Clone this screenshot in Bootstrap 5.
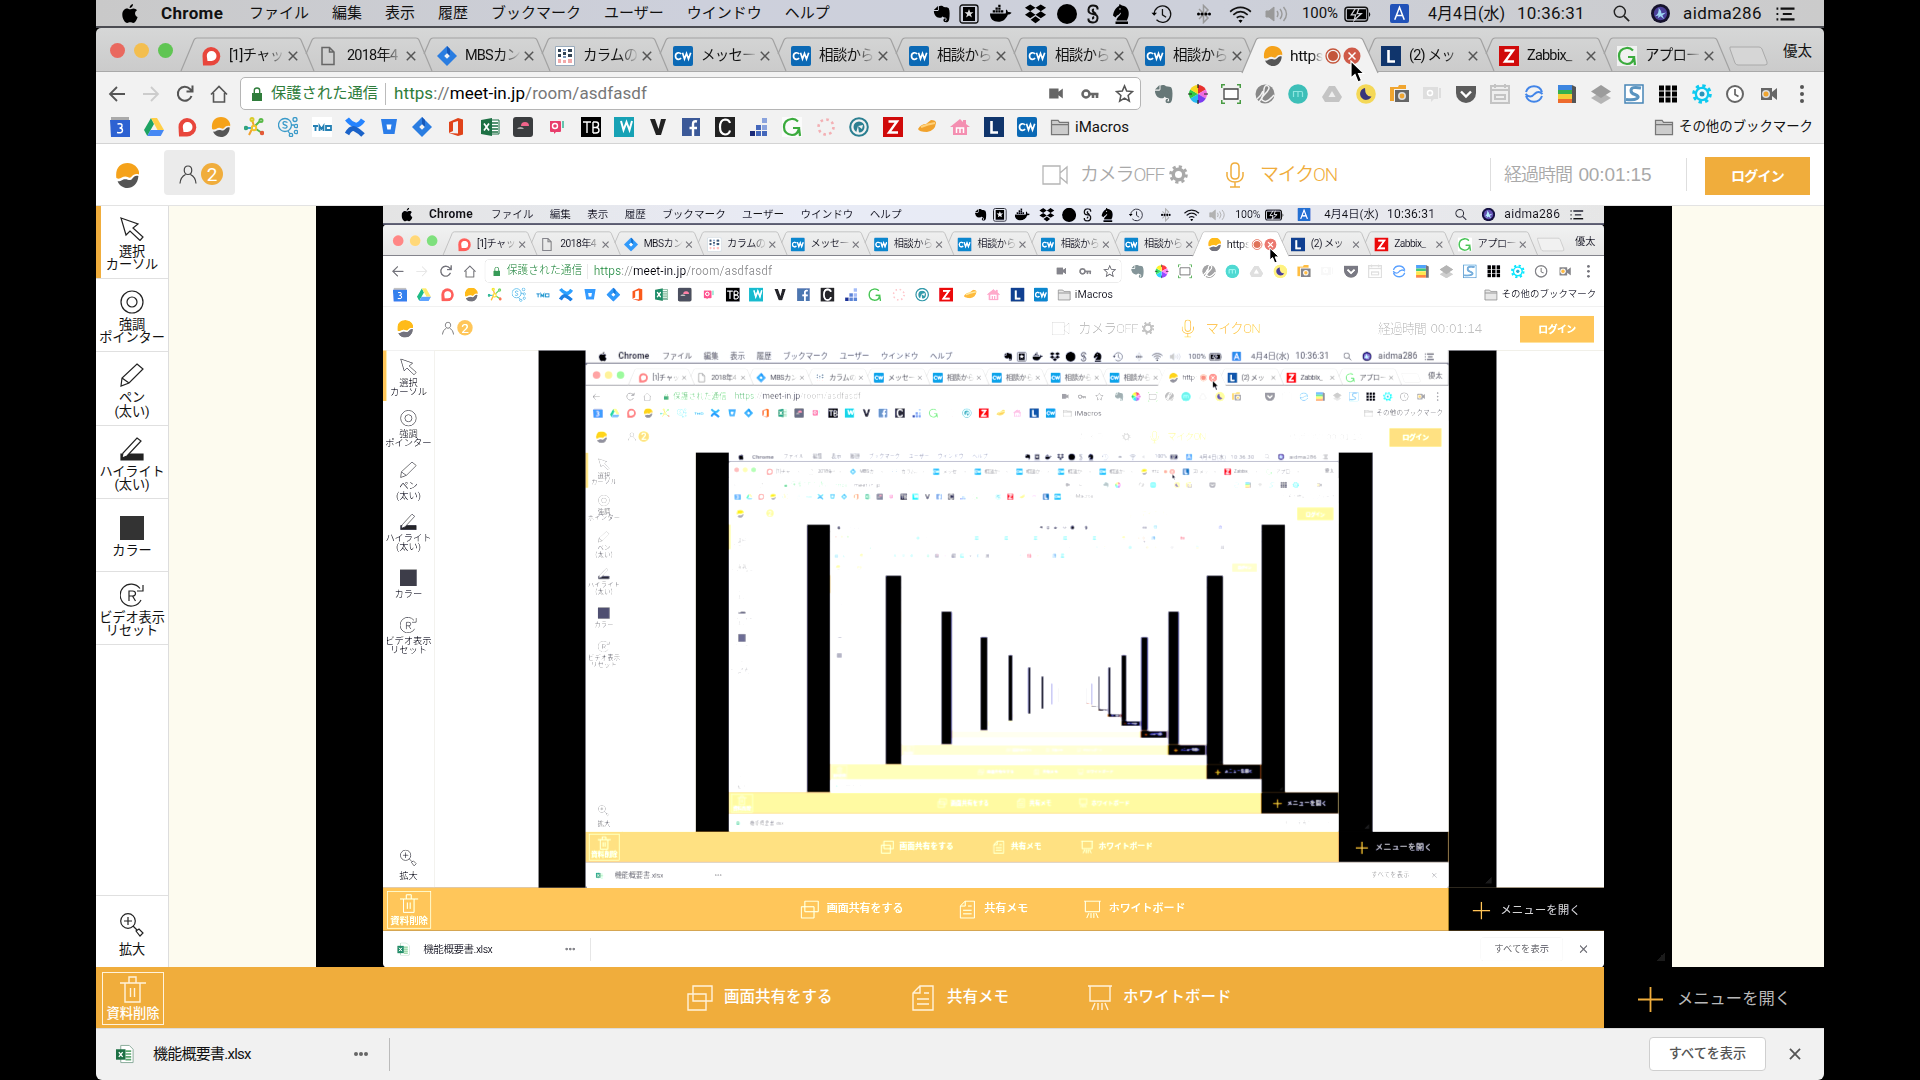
<!DOCTYPE html>
<html lang="ja">
<head>
<meta charset="utf-8">
<title>meet-in</title>
<link rel="stylesheet" href="https://cdn.jsdelivr.net/npm/bootstrap@5.3.0/dist/css/bootstrap.min.css">
<style>
body{background:#000;width:1920px;height:1080px;overflow:hidden;font-family:Roboto,"Noto Sans CJK JP",sans-serif;color:#111}
svg{display:block;flex:none}
.i20{width:20px;height:20px}
.desk{width:1728px;height:1080px;background:#000;line-height:1;white-space:nowrap;overflow:hidden;flex:none}
.ink{opacity:var(--ink,1)}
/* macOS menu bar */
.macbar{height:28px;background:linear-gradient(90deg,#c9c9c9,#cdd0dc 35%,#cdd0da 65%,#cbcbcb);font-size:15px;padding:1px 28px 0 26px;border-bottom:2px solid #4b4c52}
.macbar .menus{gap:23px}
.macbar .app-name{width:65px;margin-left:0;font-size:17px;font-weight:700;letter-spacing:.35px}
.status>*{margin-left:12px}
.status>:nth-child(2){margin-left:8px}.status>:nth-child(3){margin-left:11px}
.status>:nth-child(5),.status>:nth-child(6){margin-left:10px}.status>:nth-child(7){margin-left:13px}
.status>:nth-child(8){margin-left:21px}.status>:nth-child(9){margin-left:24px}.status>:nth-child(10){margin-left:17px}
.status>:nth-child(12){margin-left:13px}.status>:nth-child(13){margin-left:6px}
.status>:nth-child(14),.status>:nth-child(15){margin-left:19px}
.status>:nth-child(17){margin-left:25px}.status>:nth-child(18){margin-left:21px}.status>:nth-child(19){margin-left:13px}
.w36{width:36px;letter-spacing:-.1px}.w77{width:77px;font-size:16px}.w71{width:71px;font-size:17px;letter-spacing:.3px}.w80{width:80px;font-size:17px;letter-spacing:.4px}
/* browser chrome */
.strip{height:44px;background:linear-gradient(#d6d7d7,#cbcbcb);padding-left:14px;border-bottom:1px solid #a9a9a9;border-radius:5px 5px 0 0}
.lights{gap:9px;padding-top:15px;width:71px}
.dot{width:15px;height:15px;border-radius:50%;flex:none}
.d-red{background:#e9695f}.d-yel{background:#f3be4f}.d-grn{background:#60c553}
.tabs-row{padding-top:10px}
.tabx{width:118px;height:34px;padding-left:20px;padding-top:1px;font-size:14.5px;flex:none;position:relative}
.tabx .shape{position:absolute;left:0;top:0;width:134px;height:34px;fill:none;stroke:#a2a2a2;stroke-width:1.2;overflow:visible}
.tabx .shape.on{fill:#f2f2f2}
.tabx>*{position:relative}
.tlabel{width:56px;margin-left:8px;line-height:20px;letter-spacing:-.8px;-webkit-mask-image:linear-gradient(90deg,#000 65%,transparent);mask-image:linear-gradient(90deg,#000 65%,transparent)}
.tlabel.short{width:35px;margin-left:7px;margin-right:2px;font-size:15.5px;letter-spacing:-.4px}
.cross{width:10px;height:10px;margin-left:3px}
.newtab{margin:17px 0 0 8px}
.yuta{padding:17px 12px 0 0;font-size:14.5px}
.tools{height:72px;background:#f2f2f2;border-bottom:1px solid #d4d4d4;padding-top:5px}
.navs{gap:14px;padding-left:11px;width:144px}
.navs svg{width:20px;height:20px}
.nav-on{color:#555}.nav-off{color:#ccc;transform:scaleX(-1)}
.omni{width:901px;height:33px;border:1px solid #b5b5b5;border-radius:5px;background:#fff;padding:0 6px 0 11px;font-size:17px}
.sec{color:#2f7d3b;font-size:15.3px;margin-left:9px}
.bar-v{width:1px;height:22px;background:#bbb;margin:0 8px 0 7px}
.url{color:#777;letter-spacing:.06px}.url b{font-weight:400;color:#000}.url i{font-style:normal;color:#2f7d3b}
.exts{padding-left:13px;gap:13.6px}
.marks{gap:13.62px;padding:7px 11px 0 14px;font-size:15px}
.marks .fold{margin-left:-1px;gap:5px}
.marks .fold2{font-size:13.4px;gap:5px}
/* application */
.apphead{height:62px;background:#fff;border-bottom:1px solid #e3e3e3;padding-left:20px;font-size:19px;color:#a9a9a9}
.brand{margin-top:19px}
.who{width:71px;height:45px;margin:6px 0 0 25px;padding:3px 0 0 3px;background:#ebebeb;border-radius:4px;gap:4px}
.count{width:22px;height:22px;border-radius:50%;background:#f0ad3c;color:#fff;font-size:19px}
.headr{padding-right:14px}
.cam{width:82px;margin:0 7px 0 12px;letter-spacing:-1.2px}
.lib{font-family:"Liberation Sans","Noto Sans CJK JP",sans-serif}
.lite{font-weight:350}
.micic{margin-left:38px}
.mic{color:#f0ad3c;width:76px;margin:0 154px 0 16px;letter-spacing:-1.2px}
.vline{width:1px;height:33px;background:#dedede}
.elapsed{width:147px;margin:0 35px 0 13px;font-size:18px;letter-spacing:-1px}
.elapsed span{font-size:19px;letter-spacing:-.1px;margin-left:3px}
.login{width:105px;height:38px;border-radius:0;background:#f0ad3c;color:#fff;font-weight:700;font-size:14px;letter-spacing:-.8px;padding:0;margin-left:18px;margin-top:3px}
.mainrow{height:761px}
.side{width:73px;background:#fff;border-right:1px solid #ddd;color:#111}
.tool{height:73.2px;border-bottom:1.5px solid #e0e0e0;font-size:13.2px;line-height:13.2px;padding-top:11px;gap:4px;flex:none;letter-spacing:-.1px}
.tool svg{width:24px;height:24px;fill:none;stroke:#222;stroke-width:1.2}
.tool.sel{box-shadow:inset 5px 0 #f0ad3c}
.tool.one{padding-top:17px}
.tool.last{border-top:1.5px solid #e0e0e0;border-bottom:0;margin-top:auto;height:72px;gap:6px}
.stage{background:#fdfbef;padding-left:147px}
.share{width:1356px;height:761px;background:#000;padding-left:67px;position:relative}
.slot{width:1221px;height:762.5px;margin-top:-1.5px;overflow:hidden}
.stage,.share{display:flow-root}
.slot>.desk{transform:scale(.7066,.706);transform-origin:0 0;filter:url(#gain)}
.share{overflow:visible}
.grip{position:absolute;right:7px;bottom:6px;width:9px;height:9px;background:linear-gradient(135deg,transparent 50%,#1b1b1b 50%)}
.appfoot{height:61px;background:#f0ad3c;color:#fff;font-size:15.5px;font-weight:500;padding-left:6px}
.del{width:62px;height:53px;border:1.5px solid #fff3dc;margin-top:1px;font-size:13.3px;padding-top:3px;gap:4px}
.appfoot svg{fill:none;stroke:#fff3dc;stroke-width:1.4}
.f1{margin-left:523px;width:144px}.f2{margin-left:81px;width:96px;gap:13px}.f3{margin-left:80px;gap:11px}
.f1{gap:11px}
.menuopen{width:220px;margin-left:auto;background:#000;color:#b9b9b9;font-size:16.3px;font-weight:400;padding-left:34px;gap:14px;padding-top:3px}
.menuopen svg{stroke:#f0ad3c;stroke-width:1.8}
.dl{height:52px;background:#f1f1f1;border-top:1px solid #dcdcdc;border-radius:0 0 6px 6px;padding:0 0 1px 20px;font-size:15px}
.fname{width:96px;margin-left:18px;letter-spacing:-.75px}
.more{margin-left:105px;gap:1px}.more span{width:4px;height:4px;border-radius:50%;background:#666}
.dlsep{margin-left:21px;background:#bbb}
.showall{width:117px;height:34px;background:#fff;border:1px solid #cfcfcf;border-radius:4px;font-size:13.2px;font-weight:500;color:#555;padding:0}
.dlx{margin:0 23px}
.pointer{position:absolute;left:1253px;top:60px;width:16px;height:23px;z-index:9}
</style>
<script src="https://cdn.jsdelivr.net/npm/bootstrap@5.3.0/dist/js/bootstrap.bundle.min.js"></script>
</head>
<body class="d-flex justify-content-center">
<svg width="0" height="0" class="position-absolute">
<filter id="gain" color-interpolation-filters="sRGB" x="0" y="0" width="1" height="1"><feComponentTransfer>
<feFuncR type="table" tableValues="0 .1 .24 .42 .52 .62 .7 .8 .91 1 1"/><feFuncG type="table" tableValues="0 .1 .24 .42 .52 .62 .7 .8 .91 1 1"/><feFuncB type="table" tableValues="0 .1 .29 .47 .55 .63 .7 .8 .91 1 1"/></feComponentTransfer></filter>
<symbol id="apple" viewBox="0 0 16 20"><path d="M11 0c.2 2-1.600 4-3.400 4C7.400 2.200 9 .3 11 0zM8 5.300c.9 0 2-.9 3.600-.9 1.300 0 2.600.7 3.400 1.900-2.900 1.700-2.400 5.600.6 6.700C14.900 15.500 13.100 19 11.200 19c-1.100 0-1.600-.7-3-.7s-2 .7-3 .7C2.900 19 .3 14.500.3 10.700c0-3.900 2.300-6.200 4.600-6.200 1.300 0 2.300.8 3.100.8z"/></symbol>
<symbol id="ever" viewBox="0 0 20 20"><path d="M1 5.500 5.500 1v4.500zM6.500 5.500V1.500C8 .5 11 .8 12 2.200c2.500.2 4.500.3 5.500 1.500 1.300 3 1.200 8 .5 12-.5 3-2.500 3.800-5 3.300-2-.6-2-4.500 1-4.300v1.600c-1 0-1.200 1.200 0 1.300 1.500.2 1.700-3.200-.5-3.600-1.200-.2-2 0-2.800-1.500-.8 2-3 2-5 1.500C2.500 13.500.8 9 1 6.800h4.500z"/></symbol>
<symbol id="starbox" viewBox="0 0 20 20"><rect x="1" y="1" width="18" height="18" rx="2.500" fill="none" stroke="#111" stroke-width="1.300"/><path d="M4 3h12v14H4z"/><path fill="#ddd" d="m10 5 1.200 3.200h3.300l-2.600 2 1 3.300-2.900-2-2.900 2 1-3.300-2.600-2h3.300z"/></symbol>
<symbol id="docker" viewBox="0 0 24 20"><path d="M0 10h17c1-2 0-3 .5-4.500 1.500.5 2 2 2 3 1.500-.3 3 0 4 .6-.8 1.500-2.500 2-4 1.900C17.500 16 14 19 9 19 3.500 19 0 16 0 10zM3 6.500h2.500V9H3zM6 6.500h2.500V9H6zM9 6.500h2.500V9H9zM12 6.500h2.500V9H12zM6 3.500h2.500V6H6zM9 3.500h2.500V6H9zM9 .5h2.500V3H9z"/></symbol>
<symbol id="dropb" viewBox="0 0 24 20"><path d="m6.500 0 5.500 3.600-5.500 3.600L1 3.600zM17.500 0 23 3.600l-5.500 3.600L12 3.600zM6.500 7.200l5.500 3.600-5.500 3.600L1 10.800zM17.500 7.200l5.500 3.600-5.500 3.600-5.500-3.600zM12 12.400l5 3.600-5 3.600L7 16z"/></symbol>
<symbol id="knight" viewBox="0 0 18 20"><path d="M3.500 17.500h12.500V20H3.500zM4.500 16.500c0-3.500 4.500-5 4.500-8-1.500 1-2 2.500-4 3L3.500 13.500 1 11.500C1.500 8 3.500 3.500 7 2L7.500 0l2.500 1.500C16 2 17.500 8 16.500 12c-.3 2-1.300 3-1.500 4.500z"/><circle cx="8" cy="5" r=".8" fill="#ccc"/></symbol>
<symbol id="tm" viewBox="0 0 24 20"><path d="M3.500 10a9 9 0 1 1 2.500 6.300M12.500 4.500V11l4 2.500" fill="none" stroke="#111" stroke-width="1.400"/><path d="M.5 8.500h6L3.500 12z"/></symbol>
<symbol id="bt" viewBox="0 0 14 20"><path d="m2 5 9 9-4.500 4.500v-17L11 6l-9 9" fill="none" stroke="#999" stroke-width="1.500"/><circle cx="1.500" cy="10" r="1.500"/><circle cx="5" cy="10" r="1.600"/><circle cx="9" cy="10" r="1.600"/><circle cx="12.500" cy="10" r="1.500"/></symbol>
<symbol id="wifi" viewBox="0 0 25 20"><path d="M1 7.500c7-6.500 16-6.500 23 0M4.500 11c5-4.500 11-4.500 16 0M8.300 14.200c3-2.300 5.500-2.300 8.400 0" fill="none" stroke="#111" stroke-width="1.900"/><path d="m12.500 20-2.300-2.800c1.500-1 3-1 4.600 0z"/></symbol>
<symbol id="vol" viewBox="0 0 24 20"><g fill="#999" stroke="#999"><path d="M1 7h3l5-4v14l-5-4H1z"/><path fill="none" stroke-width="1.400" d="M12 7q2 3 0 6M15 5q4 5 0 10M18.500 3q6 7 0 14"/></g></symbol>
<symbol id="batt" viewBox="0 0 28 20"><rect x="1" y="3" width="23.500" height="14.500" rx="3" fill="none" stroke="#111" stroke-width="1.500"/><path d="M3 5h20v10.500H3zM26 8v5q2.500-2.500 0-5z"/><path fill="none" stroke="#d0d2d8" stroke-width="1.300" d="m12 4-4.500 7H12l-1.500 5.500L18 9.500h-4.500L15.500 4"/></symbol>
<symbol id="abox" viewBox="0 0 20 20"><rect width="20" height="20" rx="2" fill="#2152b8"/><path d="M5 16.500 10 3.500l5 13M7 12h6" fill="none" stroke="#fff" stroke-width="1.600"/></symbol>
<symbol id="lens" viewBox="0 0 20 20"><circle cx="8" cy="8" r="6.500" fill="none" stroke="#222" stroke-width="1.700"/><path d="m13 13 6 6" stroke="#222" stroke-width="2"/></symbol>
<symbol id="siri" viewBox="0 0 20 20"><circle cx="10" cy="10" r="10" fill="#15122c"/><circle cx="10" cy="10" r="7" fill="#4a3f98"/><path d="M4 13Q9 10 8 4q3 3 3 6l5-1q-3 2-4 3l2 4-4-3-3 2 1-3z" fill="#9ed7f4"/></symbol>
<symbol id="list" viewBox="0 0 22 20"><path d="M1 4h2M1 10h2M1 16h2M5.500 4H21M8 10h10M5.500 16H21" stroke="#111" stroke-width="2.300"/></symbol>
<symbol id="logo" viewBox="0 0 22 24"><path fill="#f5a21a" d="M.3 14.500C-1 5 4 0 11 0s12 6 11 11c-3-1-5.500 0-7 2-2 2.500-3.500 0-6 0-3.500 0-5 3.500-8.700 1.500z"/><path fill="#555" d="M1.500 17.500c3.500.5 4-2 7.500-2 2.500 0 4.500 2 6.500-.5 2-2 3-3.500 6-2.500C21 20 16 24 11 24c-4.500 0-8.500-3-9.500-6.500z"/></symbol>
<symbol id="red" viewBox="0 0 20 20"><path fill="#e8463c" d="M10 1a9 9 0 0 1 0 18.500H2L1.500 10A8.700 8.700 0 0 1 10 1z"/><path fill="#fff" d="M10.500 5a5 5 0 0 1 0 10H6.500l-.7-5a4.700 4.700 0 0 1 4.700-5z"/></symbol>
<symbol id="page" viewBox="0 0 20 20"><path d="M3 1.500h7.500L15 6v12.500H3zM10.500 1.500V6H15" fill="none" stroke="#666" stroke-width="1.500"/></symbol>
<symbol id="jira" viewBox="0 0 20 20"><path fill="#2a7de1" d="m10 0 10 10-10 10L0 10z"/><path fill="#1557b8" d="m10 0 3 3v7l-3-3z"/><path fill="#f2f2f2" d="m10 7.300 2.800 2.700-2.800 2.700L7.200 10z"/></symbol>
<symbol id="cells" viewBox="0 0 20 20"><path d="M.5.5h19v19H.5z" fill="#fff" stroke="#9ab"/><path fill="#345" d="M3 3h3v3H3zM8 6h3v3H8zM13 3h4v3h-4zM3 8h3v3H3zM13 8h4v3h-4z"/><path fill="#7c94b8" d="M8 3h3v2H8zM8 10h3v2H8z"/><path fill="#f3a9a9" d="M3 13h3v4H3zM8 14h3v3H8zM13 13h4v4h-4z"/></symbol>
<symbol id="cw" viewBox="0 0 20 20"><rect width="20" height="20" rx="2" fill="#0b69b5"/><path d="M8 8q-1-1.500-3-1.200Q2.500 7.200 2.500 10t2.500 3.300q2 .2 3-1.300M9.500 6.800 11.500 13 13.500 7.500 15.500 13 17.700 6.800" fill="none" stroke="#fff" stroke-width="1.700"/></symbol>
<symbol id="ell" viewBox="0 0 20 20"><path fill="#10356c" d="M0 0h20v20H0z"/><path d="M7.500 4v11.500H14" fill="none" stroke="#fff" stroke-width="2.600"/></symbol>
<symbol id="zed" viewBox="0 0 20 20"><path fill="#d00a0a" d="M0 0h20v20H0z"/><path d="M5.500 4.500h8.500L6 15.500h9" fill="none" stroke="#fff" stroke-width="2.400"/></symbol>
<symbol id="gee" viewBox="0 0 20 20"><path fill="#fff" opacity=".7" d="M0 0h20v20H0z"/><path d="M16 4.500Q13 1.500 9.500 2 2 3 2 10t8 8q6 0 7-7H11M17 11l1 8" fill="none" stroke="#3bab3d" stroke-width="2.200"/></symbol>
<symbol id="x" viewBox="0 0 10 10"><path d="m.8.8 8.400 8.400M9.200.8.8 9.200" stroke="#555" stroke-width="1.500"/></symbol>
<symbol id="back" viewBox="0 0 20 20"><path d="M18 10H3m7-7-7 7 7 7" fill="none" stroke="currentColor" stroke-width="1.800"/></symbol>
<symbol id="cal" viewBox="0 0 20 20"><path fill="#aaa" d="M1 0h18v4H1z"/><path fill="#2d62d2" d="M0 3h20v17H1z"/><path d="M7.500 7q5-1 4.500 2 0 2-2.500 2 3 0 3 2.500 0 3-5.500 2" stroke="#fff" fill="none" stroke-width="1.400"/></symbol>
<symbol id="drive" viewBox="0 0 20 20"><path fill="#1da362" d="M7 1 0 13l3.300 6L10 7z"/><path fill="#ffcf48" d="M7 1h6l7 12h-6.500z"/><path fill="#4688f4" d="M6.500 13H20l-3.300 6H3.300z"/></symbol>
<symbol id="folder" viewBox="0 0 20 18"><path d="M1 16.500V1.500h7l1.500 2H19v13zM1 6h18" fill="#ccc" stroke="#777" stroke-width="1.300"/></symbol>
<symbol id="vcam" viewBox="0 0 20 20"><path fill="#666" d="M2 4h11v4l5-4v12l-5-4v4H2z"/></symbol>
<symbol id="clock" viewBox="0 0 20 20"><circle cx="10" cy="10" r="8" fill="#fff" stroke="#666" stroke-width="2"/><path d="M10 5v5.500l3.500 2" fill="none" stroke="#666" stroke-width="1.700"/></symbol>
<symbol id="gear" viewBox="0 0 20 20"><circle cx="10" cy="10" r="5.500" fill="none" stroke="currentColor" stroke-width="3.600"/><circle cx="10" cy="10" r="8.300" fill="none" stroke="currentColor" stroke-width="3" stroke-dasharray="3.300 3.220"/></symbol>
<symbol id="xls" viewBox="0 0 20 20"><path fill="#fff" stroke="#8a9" d="M5 1h9l4 4v14H5z"/><path d="M10 7h6M10 10h6M10 13h6M10 16h6" stroke="#5da871" stroke-width="1.800"/><path fill="#1d7044" d="M0 5h10v11H0z"/><path d="m3 8 4 5M7 8l-4 5" stroke="#fff" stroke-width="1.400"/></symbol>
<symbol id="xlb" viewBox="0 0 20 20"><path fill="#fff" stroke="#1d7044" d="M10 3h9v14h-9z"/><path d="M11 6h7M11 9h7M11 12h7M11 15h7" stroke="#1d7044" stroke-width="1.400"/><path fill="#1d7044" d="M1 3 12 1v18L1 17z"/><path d="m4 6.500 5 7M9 6.500l-5 7" stroke="#fff" stroke-width="1.700"/></symbol>
</svg>

<template id="tpl">
<div class="desk d-flex flex-column position-relative">
 <div class="macbar"><div class="ink d-flex align-items-center justify-content-between h-100">
  <div class="menus d-flex align-items-center"><svg width="16" height="20"><use href="#apple"/></svg><span class="app-name">Chrome</span><span>ファイル</span><span>編集</span><span>表示</span><span>履歴</span><span>ブックマーク</span><span>ユーザー</span><span>ウインドウ</span><span>ヘルプ</span></div>
  <div class="status d-flex align-items-center">
   <svg width="18" height="20"><use href="#ever"/></svg><svg width="20" height="20"><use href="#starbox"/></svg><svg width="22" height="19"><use href="#docker"/></svg><svg width="23" height="20"><use href="#dropb"/></svg><svg width="20" height="20"><circle cx="10" cy="10" r="10"/></svg>
   <svg width="12" height="20" viewBox="0 0 12 20"><path d="M10.500 5.500V4Q10 1.500 6 1.500T1.500 5.500 6 10t4.500 4.500T6 18.500 1.500 16v-1.500M7 5.500q-2 0-1 2l3 2.500M5 14.500q2 0 1-2" fill="none" stroke="#111" stroke-width="2"/></svg>
   <svg width="18" height="20"><use href="#knight"/></svg><svg width="22" height="20"><use href="#tm"/></svg><svg width="14" height="20"><use href="#bt"/></svg><svg width="25" height="18"><use href="#wifi"/></svg><svg width="24" height="20"><use href="#vol"/></svg>
   <span class="w36">100%</span><svg width="27" height="20"><use href="#batt"/></svg><svg width="19" height="19"><use href="#abox"/></svg><span class="w77">4月4日(水)</span><span class="w71" data-clock>10:36:31</span><svg width="17" height="17"><use href="#lens"/></svg><svg width="19" height="19"><use href="#siri"/></svg><span class="w80">aidma286</span><svg width="21" height="18"><use href="#list"/></svg>
  </div></div></div>

 <div class="strip"><div class="ink d-flex">
  <div class="lights d-flex"><span class="dot d-red"></span><span class="dot d-yel"></span><span class="dot d-grn"></span></div>
  <div class="tabs-row d-flex" data-tabs></div>
  <svg class="newtab" width="46" height="24" viewBox="0 0 46 24"><path d="M9 2q-3-1-2 2l5 14q1 2 3 2h27q3 0 2-3L39 4q-1-2-3-2z" fill="#d6d6d6" stroke="#aaa"/></svg>
  <span class="yuta ms-auto">優太</span>
 </div></div>

 <div class="tools"><div class="ink">
  <div class="d-flex align-items-center">
   <div class="navs d-flex align-items-center"><svg class="nav-on"><use href="#back"/></svg><svg class="nav-off"><use href="#back"/></svg><svg viewBox="0 0 20 20"><path d="M16.500 12A7 7 0 1 1 15 5l2 2M17.500 1.500v6h-6" fill="none" stroke="#555" stroke-width="2"/></svg><svg viewBox="0 0 20 20"><path d="M2 10.500 10 2.500l8 8M4.500 9v9h11V9" fill="none" stroke="#555" stroke-width="1.600"/></svg></div>
   <div class="omni d-flex align-items-center"><svg width="10" height="14" viewBox="0 0 10 14"><path fill="#2f7d3b" d="M0 6h10v8H0z"/><path d="M2.300 7V3.500q0-2.500 2.700-2.500t2.700 2.500V7" fill="none" stroke="#2f7d3b" stroke-width="1.400"/></svg><span class="sec">保護された通信</span><span class="bar-v"></span><span class="url"><i>https</i>://<b>meet-in.jp</b>/room/asdfasdf</span>
    <svg class="ms-auto" width="18" height="17"><use href="#vcam"/></svg><svg class="mx-3" width="18" height="16" viewBox="0 0 18 16"><path d="M8 8h9.500M12 8v4M16 8v4" stroke="#666" stroke-width="2.600" fill="none"/><circle cx="5" cy="8" r="3.500" fill="none" stroke="#666" stroke-width="2.500"/></svg><svg width="19" height="19" viewBox="0 0 20 20"><path d="m10 2 2.300 5.500 6 .5-4.500 4 1.300 6L10 14.800 4.900 18l1.300-6-4.500-4 6-.5z" fill="none" stroke="#555" stroke-width="1.600"/></svg></div>
   <div class="exts d-flex align-items-center">
    <svg class="i20" viewBox="0 0 20 20" fill="#677"><use href="#ever"/></svg>
    <svg class="i20" viewBox="0 0 20 20"><path fill="#e8312e" d="M10 10V1a9 9 0 0 1 7.800 4.500z"/><path fill="#f06be0" d="m10 10 7.800-4.500A9 9 0 0 1 17.800 14.500z"/><path fill="#7b3bf0" d="m10 10 7.800 4.500A9 9 0 0 1 10 19z"/><path fill="#28b9f2" d="M10 10v9a9 9 0 0 1-7.800-4.500z"/><path fill="#31c846" d="m10 10-7.800 4.500a9 9 0 0 1 0-9z"/><path fill="#f8d823" d="M10 10 2.200 5.500A9 9 0 0 1 10 1z"/><path d="M10 0v4M10 16v4M0 10h4M16 10h4" stroke="#222" stroke-width="1.200"/></svg>
    <svg class="i20" viewBox="0 0 20 20"><path d="M3 5h14v10H3z" fill="#fff" stroke="#444" stroke-width="1.300"/><path d="M.7 4V.7H4M16 .7h3.300V4M19.300 16v3.300H16M4 19.300H.7V16" fill="none" stroke="#489b43" stroke-width="1.600"/></svg>
    <svg class="i20" viewBox="0 0 20 20"><circle cx="10" cy="10" r="9.500" fill="#888"/><path d="M4 18Q9 12 9 5q1-5 4-3t-3 8-1 7q3 2 10-6M2 15q4-3 6-8" fill="none" stroke="#f2f2f2" stroke-width="1.500"/></svg>
    <svg class="i20" viewBox="0 0 20 20"><circle cx="10" cy="10" r="9.800" fill="#3dbfb8"/><path d="M5.500 13V7.500h8q1 0 1 1.500v4M10 8v5" fill="none" stroke="#8ee6e0" stroke-width="1.200"/></svg>
    <svg class="i20" viewBox="0 0 20 20"><path fill="#c4c4c4" d="M7 2h6l7 11-3 5H3l-3-5z"/><path fill="#eee" d="m10 7 3.500 6h-7z"/></svg>
    <svg class="i20" viewBox="0 0 20 20"><circle cx="10" cy="10" r="9.800" fill="#f4d858"/><path fill="#39357b" d="M9 4a6 6 0 1 0 6.500 8.500Q9 13 9 4z"/></svg>
    <svg class="i20" viewBox="0 0 20 20"><path fill="#f0a52f" d="M1 3h8l1-2h7v4H5v12H1z"/><path fill="#666" d="M6 6h14v12H6z"/><circle cx="13" cy="12" r="4" fill="#ddd"/><circle cx="13" cy="12" r="2.400" fill="#f0a52f"/></svg>
    <svg class="i20" viewBox="0 0 20 20"><path fill="#dedede" d="M0 3h15v12h-4l-3 3v-3H0zM16 4h2v10h-2z"/><circle cx="7" cy="9" r="2.500" fill="none" stroke="#fff" stroke-width="1.500"/></svg>
    <svg class="i20" viewBox="0 0 20 20"><path fill="#5c5c5c" d="M0 2h20v7a10 10 0 0 1-20 0z"/><path d="m5 7.500 5 5 5-5" fill="none" stroke="#fff" stroke-width="2.400"/></svg>
    <svg class="i20" viewBox="0 0 20 20"><path d="M1 2h18v17H1z" fill="#eee" stroke="#c4c4c4" stroke-width="2"/><path d="M1 6h18M5 0v4M15 0v4M5 11h10v4H5z" fill="none" stroke="#c4c4c4" stroke-width="2"/></svg>
    <svg class="i20" viewBox="0 0 20 20"><path d="M2 8a8.500 8.500 0 0 1 16 0M18 12a8.500 8.500 0 0 1-16 0M1.500 10q5 5 9 0 4-4 8 0" fill="none" stroke="#4285e8" stroke-width="2"/></svg>
    <svg class="i20" viewBox="0 0 20 20"><path fill="#3d86e0" d="M1 1h14v5H1z"/><path fill="#35b04d" d="M1 6h14v4H1z"/><path fill="#f7cd36" d="M1 10h14v5H1z"/><path fill="#ee6b2d" d="M1 15h14v4H1z"/><path fill="#555" d="m15 1 4 2v16h-4z"/></svg>
    <svg class="i20" viewBox="0 0 20 20"><path fill="#b5b5b5" d="m10 8 10 6-10 6-10-6z"/><path fill="#9c9c9c" d="m10 1 10 6.500L10 14 0 7.500z"/></svg>
    <svg class="i20" viewBox="0 0 20 20"><path d="M1 1h18v18H1z" fill="#fff" stroke="#4785b6" stroke-width="1.500"/><path d="M17 4Q7 2 7 6.500q0 3 4 4 5 2 2 4-3 2-11 1" fill="none" stroke="#5a94c0" stroke-width="3"/></svg>
    <svg class="i20" viewBox="0 0 20 20"><path d="M1 4h18M1 10h18M1 16h18" stroke="#000" stroke-width="5" stroke-dasharray="5 1.500"/></svg>
    <svg class="i20 text-info" viewBox="0 0 20 20"><use href="#gear"/><circle cx="10" cy="10" r="5" fill="#eefafd"/><circle cx="10" cy="10" r="2.500" fill="#2994b8"/></svg>
    <svg class="i20"><use href="#clock"/></svg>
    <svg class="i20" viewBox="0 0 20 20"><use href="#vcam"/><circle cx="7" cy="10" r="4" fill="#ddd"/><circle cx="7" cy="10" r="2.500" fill="#f0a52f"/></svg>
    <svg class="i20" viewBox="0 0 20 20"><g fill="#555"><circle cx="10" cy="3" r="2"/><circle cx="10" cy="10" r="2"/><circle cx="10" cy="17" r="2"/></g></svg>
   </div></div>
  <div class="marks d-flex align-items-center">
   <svg class="i20"><use href="#cal"/></svg><svg class="i20"><use href="#drive"/></svg><svg class="i20"><use href="#red"/></svg><svg class="i20"><use href="#logo"/></svg>
   <svg class="i20" viewBox="0 0 20 20" fill="none" stroke-width="2"><path stroke="#f2a12c" d="M10 9 8 3M8 12l-3 6"/><path stroke="#58b947" d="m11 9 5-5M12 12l6 4"/><path stroke="#35a7d8" d="M9 11H2"/><circle cx="8" cy="2.500" r="1.500" stroke="#d9cc28"/><circle cx="17" cy="3.500" r="1.500" stroke="#58b947"/><circle cx="2" cy="11" r="1.200" stroke="#2fa27a"/><circle cx="10" cy="11" r="2.200" stroke="#f2c32c"/><circle cx="18" cy="16" r="1.200" stroke="#e45836"/></svg>
   <svg class="i20" viewBox="0 0 20 20" fill="none" stroke="#3a9ac9" stroke-width="1.300"><circle cx="7" cy="8" r="6.500"/><path d="M9.500 5.500q-4-2-4.500.5 0 1.500 2 2 2.500.7 2 2-.7 2-4.500.5M13 8h3M10 14l2 3"/><circle cx="17" cy="2.500" r="2"/><circle cx="18" cy="9" r="1.700"/><circle cx="13" cy="18" r="1.700"/><circle cx="18" cy="15" r="1.700"/></svg>
   <svg class="i20" viewBox="0 0 20 20"><path fill="#fff" d="M0 0h20v20H0z"/><path d="M1 9h5M3.500 9v5M7.500 14V9l2 3 2-3v5M14 9h5v4h-5z" fill="none" stroke="#2480b4" stroke-width="1.800"/></svg>
   <svg class="i20" viewBox="0 0 20 20" fill="none" stroke-width="5"><path stroke="#2684ff" d="M2 2q4 5 8 6t8-5"/><path stroke="#1b63c9" d="M2 17q4-7 8-5t8 6"/></svg>
   <svg class="i20" viewBox="0 0 20 20"><path fill="#2b7de9" d="M2 2h16l-2.500 15h-11z"/><path fill="#fff" d="M7.500 7.500h5l-.8 5H8.300z"/></svg>
   <svg class="i20"><use href="#jira"/></svg>
   <svg class="i20" viewBox="0 0 20 20"><path d="M3 5 12 1l5 1.500v15L12 19l-9-3 9 .5V4L7 5.500v8.500L3 16z" fill="#e0431a"/></svg>
   <svg class="i20"><use href="#xlb"/></svg>
   <svg class="i20" viewBox="0 0 20 20"><rect width="20" height="20" rx="3" fill="#3b3d3f"/><path fill="#f0648a" d="M8 9a4 4 0 0 1 8 0z"/><path fill="#aaa" d="M4 12a4 4 0 0 1 7 0z"/></svg>
   <svg class="i20" viewBox="0 0 20 20"><path fill="#e83e6c" d="M3 4h10q1 0 1 1v9q0 1-1 1H9l-2 2v-2H4q-1 0-1-1V5z"/><circle cx="8" cy="9" r="2.500" fill="none" stroke="#fff" stroke-width="1.400"/><path d="M16 4v7" stroke="#35b597" stroke-width="1.500"/></svg>
   <svg class="i20" viewBox="0 0 20 20"><path d="M0 0h20v20H0z"/><path d="M2 5h8M6 5v11M12 5v11M12 5h3q2.500 0 2.500 2.500T15 10.500h-3 3q3 0 3 2.700T15 16h-3" fill="none" stroke="#fff" stroke-width="1.400"/></svg>
   <svg class="i20" viewBox="0 0 20 20"><path fill="#17a2b5" d="M0 0h20v20H0z"/><path d="m7 4 2.500 9L12.500 5l3 8L18 4" fill="none" stroke="#fff" stroke-width="2"/></svg>
   <svg class="i20" viewBox="0 0 20 20"><path d="M2 2h5l3.500 10L13 2h5l-5 16H8z" fill="#222"/></svg>
   <svg class="i20" viewBox="0 0 20 20"><path fill="#3b5998" d="M1 1h18v18H1z"/><path d="M16 4.500q-4-1-4 2.500v12M8.500 11H16" fill="none" stroke="#fff" stroke-width="2.400"/></svg>
   <svg class="i20" viewBox="0 0 20 20"><path fill="#222" d="M0 0h20v20H0z"/><path d="M15 6q-1-3.500-5-3.500Q5 3 5 10t5 7.500q4 0 5-4" fill="none" stroke="#fff" stroke-width="2.200"/></svg>
   <svg class="i20" viewBox="0 0 20 20"><path fill="#1b2a78" d="M1 14h5v5H1z"/><path fill="#4467bb" d="M7 8h5v5H7zM7 14h5v5H7zM13 14h5v5h-5z"/><path fill="#8aa3dd" d="M13 1h5v5h-5zM13 8h5v5h-5z"/></svg>
   <svg class="i20"><use href="#gee"/></svg>
   <svg class="i20" viewBox="0 0 20 20"><circle cx="10" cy="10" r="7.500" fill="none" stroke="#f3b0b4" stroke-width="2.600" stroke-dasharray="2.600 3.290"/></svg>
   <svg class="i20" viewBox="0 0 20 20"><circle cx="10" cy="10" r="8.800" fill="none" stroke="#2b7f91" stroke-width="2"/><circle cx="10" cy="10" r="5.500" fill="#2b7f91"/><path fill="#f2f2f2" d="m9 9 1 7H7zM9 9l5-1-1 4z"/></svg>
   <svg class="i20"><use href="#zed"/></svg>
   <svg class="i20" viewBox="0 0 20 20"><path d="M1 12Q4 7 9 7l5-4q5 0 5 3-1 8-9 9-8 0-9-3z" fill="#f1a22c"/><path d="M4 10q7-3 14-4" stroke="#ffd17b" stroke-width="2" fill="none"/></svg>
   <svg class="i20" viewBox="0 0 20 20"><path fill="#f48fb1" d="m10 2 3 3V3h3v4l4 3h-3v8H3v-8H0z"/><path d="M6.500 16v-5h7v5M10 11v5" fill="none" stroke="#fff" stroke-width="1.500"/></svg>
   <svg class="i20"><use href="#ell"/></svg><svg class="i20"><use href="#cw"/></svg>
   <span class="fold d-flex align-items-center"><svg width="20" height="17"><use href="#folder"/></svg>iMacros</span>
   <span class="fold2 d-flex align-items-center ms-auto"><svg width="20" height="17"><use href="#folder"/></svg>その他のブックマーク</span>
  </div></div></div>

 <div class="apphead"><div class="ink d-flex h-100">
  <svg class="brand" width="23" height="25"><use href="#logo"/></svg>
  <div class="who d-flex align-items-center justify-content-center"><svg width="18" height="19" viewBox="0 0 18 19"><path d="M9 1c5 0 5 8.500 0 8.500S4 1 9 1zM1 18.500q.5-6.500 5.500-9M17 18.500q-.5-6.500-5.500-9" fill="none" stroke="#444" stroke-width="1.200"/></svg><span class="count d-flex align-items-center justify-content-center">2</span></div>
  <div class="headr d-flex align-items-center ms-auto"><svg width="26" height="20" viewBox="0 0 26 20"><path d="M1 1h17v18H1zM18 8l7-6v16l-7-6" fill="none" stroke="#b5b5b5" stroke-width="1.300"/></svg><span class="cam lite">カメラOFF</span><svg width="19" height="19"><use href="#gear"/></svg>
   <svg class="micic" width="18" height="26" viewBox="0 0 18 26"><path d="M9 1q4 0 4 4v8q0 4-4 4t-4-4V5q0-4 4-4zM1 10v4q1 6 8 6t8-6v-4M9 20v5M4 25h10" fill="none" stroke="#f0ad3c" stroke-width="1.500"/></svg><span class="mic lite">マイクON</span><span class="vline"></span><span class="elapsed lite">経過時間 <span class="lib">00:01:15</span></span><span class="vline"></span><button class="btn login">ログイン</button></div>
 </div></div>

 <div class="mainrow d-flex">
  <div class="side"><div class="ink d-flex flex-column h-100 text-center">
   <div class="tool sel d-flex flex-column align-items-center"><svg viewBox="0 0 24 24"><path d="m1 1 17 6-5 4 10 9-3 3.500L10 14l-4 4z"/></svg><span>選択<br>カーソル</span></div>
   <div class="tool d-flex flex-column align-items-center"><svg viewBox="0 0 24 24"><circle cx="12" cy="12" r="11"/><circle cx="12" cy="12" r="5"/></svg><span>強調<br>ポインター</span></div>
   <div class="tool d-flex flex-column align-items-center"><svg viewBox="0 0 24 24"><path d="m17 1 6 5L9 20l-8 3 1-8zM2 15l7 5"/></svg><span>ペン<br>(太い)</span></div>
   <div class="tool d-flex flex-column align-items-center"><svg viewBox="0 0 24 24"><path d="M1 17h22v6H1z" fill="#222"/><path d="m17 1 4 3L7 19l-5 2 1-5z" fill="#fff"/></svg><span>ハイライト<br>(太い)</span></div>
   <div class="tool one d-flex flex-column align-items-center"><svg viewBox="0 0 24 24"><path d="M0 0h24v24H0z" fill="#333" stroke="none"/></svg><span>カラー</span></div>
   <div class="tool d-flex flex-column align-items-center"><svg viewBox="0 0 24 24"><path d="M21 17A11 11 0 1 1 20 5.500M23 2v6h-6M9 18V8h3.500q3 0 3 2.500t-3 2.500H9m3.500 0 3 5"/></svg><span>ビデオ表示<br>リセット</span></div>
   <div class="tool one last d-flex flex-column align-items-center"><svg viewBox="0 0 24 24"><circle cx="8" cy="8" r="7.300"/><path d="M4 8h8M8 4v8M13 13l4 4M16 18l3-2 4 4-3 3z"/></svg><span>拡大</span></div>
  </div></div>
  <div class="stage flex-grow-1"><div class="share"><div class="slot bg-white"></div><span class="grip"></span></div></div>
 </div>

 <div class="appfoot d-flex"><div class="ink d-flex align-items-center">
  <div class="del d-flex flex-column align-items-center"><svg width="26" height="27" viewBox="0 0 26 27"><path d="M0 7h26M9 7V1h7v6M5 7v19h15V7M10.500 12v9M14.500 12v9"/></svg><span>資料削除</span></div>
  <div class="f1 d-flex align-items-center"><svg width="26" height="26" viewBox="0 0 26 26"><path d="M6 1h19v15H6zM1 9h18v16H1z"/></svg><span>画面共有をする</span></div>
  <div class="f2 d-flex align-items-center"><svg width="22" height="26" viewBox="0 0 22 26"><path d="M8 1h13v24H1V8zM8 1v7H1M12 8h5M5 14h12M5 19h12"/></svg><span>共有メモ</span></div>
  <div class="f3 d-flex align-items-center"><svg width="24" height="26" viewBox="0 0 24 26"><path d="M0 1h24M2 1v15h20V1M7 18l-3 7M10 18v7M14 18v7M17 18l3 7"/></svg><span>ホワイトボード</span></div>
  </div><div class="menuopen d-flex align-items-center"><svg width="25" height="25" viewBox="0 0 25 25"><path d="M0 12.500h25M12.500 0v25"/></svg><span>メニューを開く</span></div>
 </div>

 <div class="dl"><div class="ink d-flex align-items-center h-100">
  <svg width="19" height="20"><use href="#xls"/></svg><span class="fname">機能概要書.xlsx</span><span class="more d-flex"><span></span><span></span><span></span></span><span class="vline dlsep"></span>
  <button class="btn showall ms-auto">すべてを表示</button><svg class="dlx" width="12" height="12"><use href="#x"/></svg></div></div>
 <svg class="pointer" viewBox="0 0 16 23"><path d="M2 1v17l4-3.500 3 7.500 3.500-1.500-3-7H15z" fill="#000" stroke="#fff" stroke-width="1.200"/></svg>
</div>
</template>

<script>
const tabs=[['red','[1]チャッ'],['page','2018年4'],['jira','MBSカン'],['cells','カラムの'],['cw','メッセー'],['cw','相談から'],['cw','相談から'],['cw','相談から'],['cw','相談から'],['logo','https',1],['ell','(2) メッ'],['zed','Zabbix_'],['gee','アプロー']];
const use=(id,c)=>`<svg class="${c}"><use href="#${id}"/></svg>`;
const tabHtml=tabs.map(([icon,label,on],i)=>{
  const shape=on?'<svg class="shape on" viewBox="0 0 134 34"><path d="M-1 35 13 2q1-2 3-2h101q2 0 3 2l15 33"/></svg>'
    :`<svg class="shape" viewBox="0 0 134 34"><path d="M${i?'7 16':'0 33'} 13 2q1-2 3-2h101q2 0 3 2l13 31"/></svg>`;
  const end=on?'<svg width="36" height="18" viewBox="0 0 36 18"><circle cx="8" cy="9" r="7" fill="none" stroke="#c4553b" stroke-width="1.300"/><circle cx="8" cy="9" r="5" fill="#c4553b"/><circle cx="27" cy="9" r="8.500" fill="#cf5a48"/><path d="m23.500 5.500 7 7m0-7-7 7" stroke="#fff" stroke-width="1.500"/></svg>':use('x','cross');
  return `<div class="tabx d-flex align-items-center ${on?'z-2':''}">${shape}${use(icon,'i20')}<span class="tlabel ${on?'short':''}">${label}</span>${end}</div>`;
}).join('');
const ink=[1,1,1,1,.9,.6];
let host=document.body;
for(let n=0;n<15;n++){
  const desk=document.getElementById('tpl').content.cloneNode(true).firstElementChild;
  desk.querySelector('[data-tabs]').innerHTML=tabHtml;
  desk.style.setProperty('--ink',ink[n]??0);
  if(n)desk.querySelector('.elapsed .lib').textContent='00:01:14';
  if(n>2)desk.querySelector('[data-clock]').textContent='10:36:30';
  const slot=desk.querySelector('.slot');
  host.append(desk);
  host=slot;
  // past a few generations only the frame and the menu button remain visible
  if(n>5)desk.querySelectorAll('.ink,.pointer').forEach(e=>e.remove());
  if(n>9)desk.querySelector('.menuopen').replaceChildren();
}
document.querySelectorAll('.desk').forEach((d,n)=>{
  if(n<4)return;
  for(const s of ['.macbar','.strip','.tools']){const e=d.querySelector(s);e.style.background='#fff';e.style.borderColor='#fff'}
  if(n>4)d.querySelector('.appfoot').style.background=n>6?'#fff':n>5?'#fdf2dc':'#f6c980';
});
</script>
</body>
</html>
